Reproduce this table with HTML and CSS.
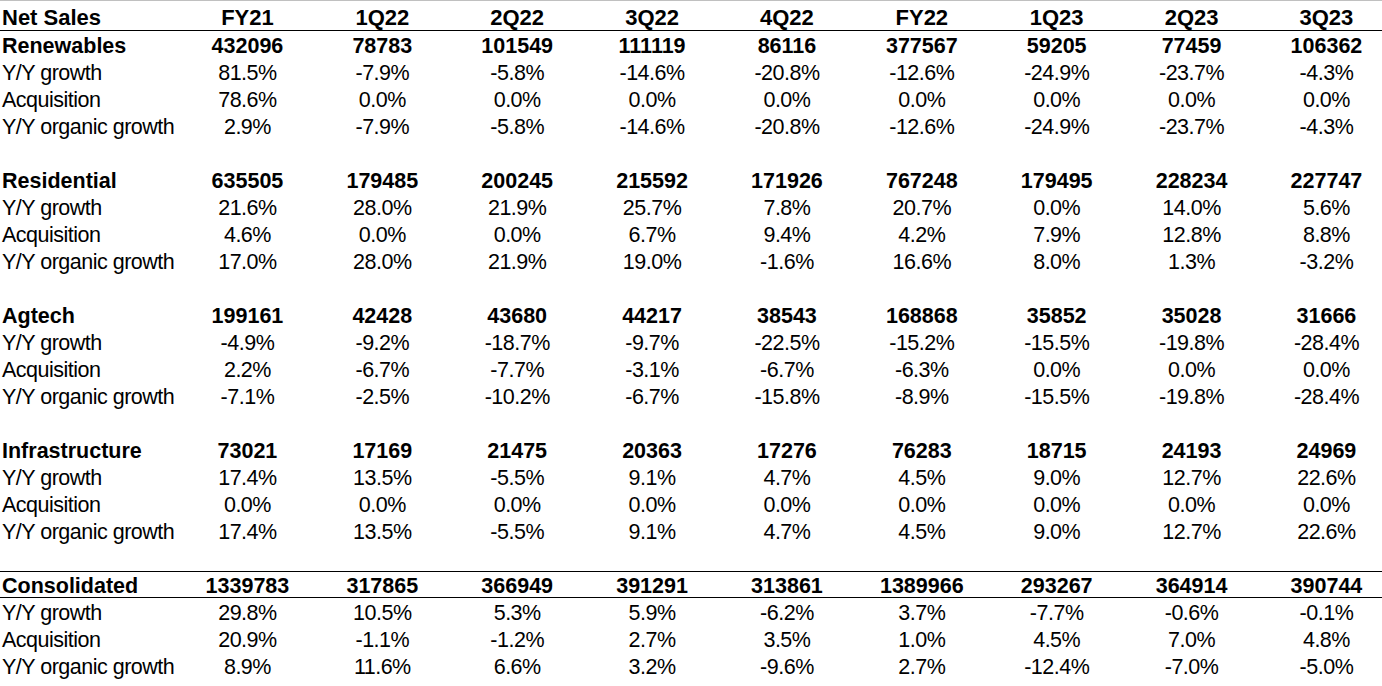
FILE: index.html
```html
<!DOCTYPE html>
<html>
<head>
<meta charset="utf-8">
<link rel="stylesheet" href="styles.css">
</head>
<body>
<div class="sheet">
  <div class="row head"><div class="label">Net Sales</div><div>FY21</div><div>1Q22</div><div>2Q22</div><div>3Q22</div><div>4Q22</div><div>FY22</div><div>1Q23</div><div>2Q23</div><div>3Q23</div></div>

  <div class="row seg"><div class="label">Renewables</div><div>432096</div><div>78783</div><div>101549</div><div>111119</div><div>86116</div><div>377567</div><div>59205</div><div>77459</div><div>106362</div></div>
  <div class="row"><div class="label">Y/Y growth</div><div>81.5%</div><div>-7.9%</div><div>-5.8%</div><div>-14.6%</div><div>-20.8%</div><div>-12.6%</div><div>-24.9%</div><div>-23.7%</div><div>-4.3%</div></div>
  <div class="row"><div class="label">Acquisition</div><div>78.6%</div><div>0.0%</div><div>0.0%</div><div>0.0%</div><div>0.0%</div><div>0.0%</div><div>0.0%</div><div>0.0%</div><div>0.0%</div></div>
  <div class="row"><div class="label">Y/Y organic growth</div><div>2.9%</div><div>-7.9%</div><div>-5.8%</div><div>-14.6%</div><div>-20.8%</div><div>-12.6%</div><div>-24.9%</div><div>-23.7%</div><div>-4.3%</div></div>
  <div class="row"></div>

  <div class="row seg"><div class="label">Residential</div><div>635505</div><div>179485</div><div>200245</div><div>215592</div><div>171926</div><div>767248</div><div>179495</div><div>228234</div><div>227747</div></div>
  <div class="row"><div class="label">Y/Y growth</div><div>21.6%</div><div>28.0%</div><div>21.9%</div><div>25.7%</div><div>7.8%</div><div>20.7%</div><div>0.0%</div><div>14.0%</div><div>5.6%</div></div>
  <div class="row"><div class="label">Acquisition</div><div>4.6%</div><div>0.0%</div><div>0.0%</div><div>6.7%</div><div>9.4%</div><div>4.2%</div><div>7.9%</div><div>12.8%</div><div>8.8%</div></div>
  <div class="row"><div class="label">Y/Y organic growth</div><div>17.0%</div><div>28.0%</div><div>21.9%</div><div>19.0%</div><div>-1.6%</div><div>16.6%</div><div>8.0%</div><div>1.3%</div><div>-3.2%</div></div>
  <div class="row"></div>

  <div class="row seg"><div class="label">Agtech</div><div>199161</div><div>42428</div><div>43680</div><div>44217</div><div>38543</div><div>168868</div><div>35852</div><div>35028</div><div>31666</div></div>
  <div class="row"><div class="label">Y/Y growth</div><div>-4.9%</div><div>-9.2%</div><div>-18.7%</div><div>-9.7%</div><div>-22.5%</div><div>-15.2%</div><div>-15.5%</div><div>-19.8%</div><div>-28.4%</div></div>
  <div class="row"><div class="label">Acquisition</div><div>2.2%</div><div>-6.7%</div><div>-7.7%</div><div>-3.1%</div><div>-6.7%</div><div>-6.3%</div><div>0.0%</div><div>0.0%</div><div>0.0%</div></div>
  <div class="row"><div class="label">Y/Y organic growth</div><div>-7.1%</div><div>-2.5%</div><div>-10.2%</div><div>-6.7%</div><div>-15.8%</div><div>-8.9%</div><div>-15.5%</div><div>-19.8%</div><div>-28.4%</div></div>
  <div class="row"></div>

  <div class="row seg"><div class="label">Infrastructure</div><div>73021</div><div>17169</div><div>21475</div><div>20363</div><div>17276</div><div>76283</div><div>18715</div><div>24193</div><div>24969</div></div>
  <div class="row"><div class="label">Y/Y growth</div><div>17.4%</div><div>13.5%</div><div>-5.5%</div><div>9.1%</div><div>4.7%</div><div>4.5%</div><div>9.0%</div><div>12.7%</div><div>22.6%</div></div>
  <div class="row"><div class="label">Acquisition</div><div>0.0%</div><div>0.0%</div><div>0.0%</div><div>0.0%</div><div>0.0%</div><div>0.0%</div><div>0.0%</div><div>0.0%</div><div>0.0%</div></div>
  <div class="row"><div class="label">Y/Y organic growth</div><div>17.4%</div><div>13.5%</div><div>-5.5%</div><div>9.1%</div><div>4.7%</div><div>4.5%</div><div>9.0%</div><div>12.7%</div><div>22.6%</div></div>
  <div class="row"></div>

  <div class="row seg total"><div class="label">Consolidated</div><div>1339783</div><div>317865</div><div>366949</div><div>391291</div><div>313861</div><div>1389966</div><div>293267</div><div>364914</div><div>390744</div></div>
  <div class="row"><div class="label">Y/Y growth</div><div>29.8%</div><div>10.5%</div><div>5.3%</div><div>5.9%</div><div>-6.2%</div><div>3.7%</div><div>-7.7%</div><div>-0.6%</div><div>-0.1%</div></div>
  <div class="row"><div class="label">Acquisition</div><div>20.9%</div><div>-1.1%</div><div>-1.2%</div><div>2.7%</div><div>3.5%</div><div>1.0%</div><div>4.5%</div><div>7.0%</div><div>4.8%</div></div>
  <div class="row"><div class="label">Y/Y organic growth</div><div>8.9%</div><div>11.6%</div><div>6.6%</div><div>3.2%</div><div>-9.6%</div><div>2.7%</div><div>-12.4%</div><div>-7.0%</div><div>-5.0%</div></div>
</div>
</body>
</html>
```
FILE: styles.css
```css
html, body {
  margin: 0;
  padding: 0;
  background: #ffffff;
}
body {
  width: 1382px;
  height: 686px;
  overflow: hidden;
}
.sheet {
  width: 1394px;
  font-family: "Liberation Sans", Arial, sans-serif;
  font-size: 21.5px;
  color: #000000;
}
.row {
  display: grid;
  grid-template-columns: 180px repeat(9, 134.875px);
  height: 27px;
  box-sizing: border-box;
  padding-top: 2px;
  line-height: 27px;
  letter-spacing: -0.5px;
  white-space: nowrap;
}
.row > div {
  text-align: center;
}
.row > .label {
  text-align: left;
  padding-left: 2px;
}
.head {
  height: 31px;
  border-top: 1px solid #c0c0c0;
  border-bottom: 1px solid #000000;
  padding-top: 3px;
  font-weight: bold;
  letter-spacing: 0;
  font-size: 22px;
}
.seg {
  font-weight: bold;
  letter-spacing: 0;
}
.total {
  border-top: 1px solid #000000;
  border-bottom: 1px solid #000000;
  padding-top: 1px;
}
```
